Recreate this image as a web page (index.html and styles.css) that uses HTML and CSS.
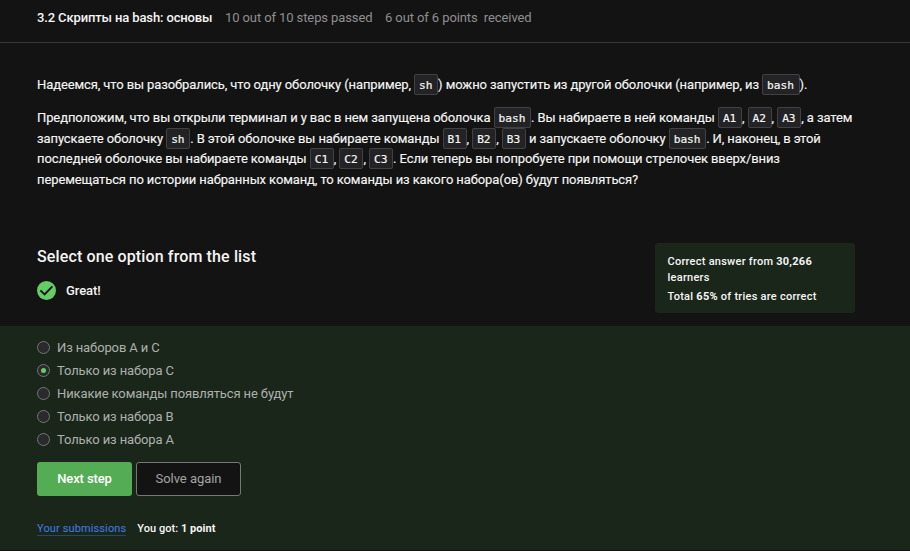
FILE: index.html
```html
<!DOCTYPE html>
<html lang="ru">
<head>
<meta charset="utf-8">
<title>3.2 Скрипты на bash: основы</title>
<link rel="stylesheet" href="styles.css">
</head>
<body>
<header class="topbar">
  <span class="lesson">3.2 Скрипты на bash: основы</span>
  <span class="steps">10 out of 10 steps passed</span>
  <span class="points">6 out of 6 points&nbsp; received</span>
</header>
<main>
  <section class="statement">
    <p>Надеемся, что вы разобрались, что одну оболочку (например, <code>sh</code>) можно запустить из другой оболочки (например, из <code>bash</code>).</p>
    <p>Предположим, что вы открыли терминал и у вас в нем запущена оболочка <code>bash</code>. Вы набираете в ней команды <code>A1</code>, <code>A2</code>, <code>A3</code>, а затем<br>
    запускаете оболочку <code>sh</code>. В этой оболочке вы набираете команды <code>B1</code>, <code>B2</code>, <code>B3</code> и запускаете оболочку <code>bash</code>. И, наконец, в этой<br>
    последней оболочке вы набираете команды <code>C1</code>, <code>C2</code>, <code>C3</code>. Если теперь вы попробуете при помощи стрелочек вверх/вниз<br>
    перемещаться по истории набранных команд, то команды из какого набора(ов) будут появляться?</p>
  </section>
  <section class="quiz-head">
    <div>
      <h2>Select one option from the list</h2>
      <div class="verdict">
        <svg class="check" viewBox="0 0 19 19"><circle cx="9.5" cy="9.5" r="9.5" fill="#66cc66"/><path d="M3.4 9.4 7.6 13.4 15.4 5.4" fill="none" stroke="#131313" stroke-width="1.9"/></svg>
        <span>Great!</span>
      </div>
    </div>
    <aside class="stats">
      <p>Correct answer from <b>30,266</b> learners</p>
      <p>Total <b>65%</b> of tries are correct</p>
    </aside>
  </section>
  <section class="answer">
    <ul class="options">
      <li><i class="radio"></i><span>Из наборов A и C</span></li>
      <li><i class="radio on"></i><span>Только из набора C</span></li>
      <li><i class="radio"></i><span>Никакие команды появляться не будут</span></li>
      <li><i class="radio"></i><span>Только из набора B</span></li>
      <li><i class="radio"></i><span>Только из набора A</span></li>
    </ul>
    <div class="actions">
      <button class="next">Next step</button>
      <button class="again">Solve again</button>
    </div>
    <div class="foot">
      <a class="subs">Your submissions</a>
      <span>You got: <b>1 point</b></span>
    </div>
  </section>
</main>
</body>
</html>
```
FILE: styles.css
```css
* { box-sizing: border-box; }
body {
  margin: 0;
  height: 551px;
  overflow: hidden;
  background: #131313;
  color: #f5f5f5;
  font: 13px/20.6px Roboto, sans-serif;
  letter-spacing: -0.1px;
}
p, h2, ul { margin: 0; padding: 0; }
.topbar {
  display: flex;
  height: 43px;
  padding: 8px 37px 0;
  border-bottom: 1px solid #363636;
  white-space: nowrap;
}
.lesson { width: 188px; font-weight: 500; letter-spacing: -0.13px; }
.steps { width: 160px; color: #8f8f8f; }
.points { color: #8f8f8f; }
.statement {
  height: 200px;
  padding: 32px 0 0 37px;
  -webkit-text-stroke: 0.15px #f5f5f5;
  white-space: nowrap;
}
.statement p { margin-bottom: 12.4px; }
code {
  padding: 4px 4.7px 2px 4px;
  border: 1px solid #414144;
  border-radius: 2px;
  background: #232325;
  font: 11.2px/14px "DejaVu Sans Mono", monospace;
  letter-spacing: -0.05px;
  -webkit-text-stroke: 0.2px #f5f5f5;
}
.quiz-head {
  display: flex;
  justify-content: space-between;
  height: 83px;
  padding: 0 55px 0 37px;
}
h2 { margin-top: 3px; font-size: 16px; font-weight: 500; line-height: 22px; letter-spacing: 0.13px; }
.verdict { display: flex; align-items: center; gap: 10px; margin-top: 12px; font-weight: 500; }
.verdict span { padding-top: 1px; }
.check { width: 19px; height: 19px; }
.stats {
  width: 200px;
  height: 70px;
  padding: 11px 12px 9px 12.5px;
  border-radius: 3px;
  background: #1b261b;
  font-size: 11px;
  font-weight: 500;
  line-height: 16px;
  letter-spacing: 0.25px;
}
.stats p + p { margin-top: 3px; }
.answer { height: 224px; padding: 10px 37px 0; background: #1b261b; }
.options { list-style: none; color: #adb1ad; letter-spacing: -0.12px; }
.options li { display: flex; align-items: center; gap: 7px; height: 23px; }
.options span { padding-top: 1px; }
.radio {
  display: flex;
  width: 13px;
  height: 13px;
  border: 1px solid #767676;
  border-radius: 50%;
  background: #2a2a2c;
}
.on::after { content: ""; width: 5px; height: 5px; margin: auto; border-radius: 50%; background: #66cc66; }
.actions { display: flex; gap: 4px; margin-top: 11px; }
button {
  height: 34px;
  padding: 0;
  border: 0;
  border-radius: 3px;
  font: 500 13px/34px Roboto, sans-serif;
  letter-spacing: -0.1px;
}
.next { width: 95px; background: #54ad54; color: #fff; }
.again { width: 105px; border: 1px solid #777; background: #131313; color: #a3a3a3; font-weight: 400; line-height: 32px; letter-spacing: -0.05px; }
.foot { display: flex; gap: 11px; margin-top: 26px; font-size: 11px; font-weight: 500; line-height: 14px; letter-spacing: 0.05px; }
.subs { height: 14px; border-bottom: 1px solid #284966; color: #3d7eea; font-weight: 400; letter-spacing: 0.12px; }
b { font-weight: 700; }
```
